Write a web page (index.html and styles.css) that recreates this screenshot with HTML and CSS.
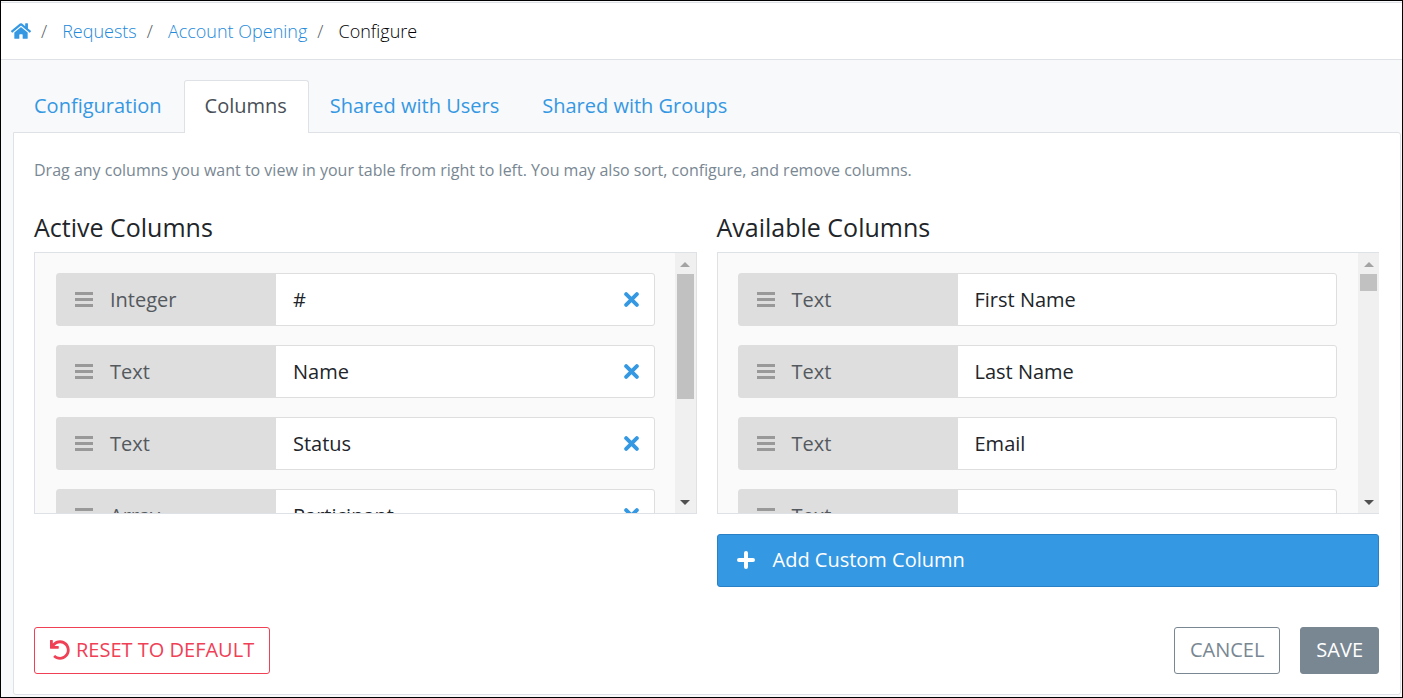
FILE: index.html
```
<!DOCTYPE html>
<html lang="en">
<head>
<meta charset="utf-8">
<title>Configure</title>
<link rel="stylesheet" href="styles.css">
</head>
<body>
<svg width="0" height="0" class="sprite" aria-hidden="true">
  <symbol id="bars" viewBox="0 0 18 16"><path d="M0 0h18v3H0zM0 6h18v3H0zM0 12h18v3H0z" fill="currentColor"/></symbol>
  <symbol id="times" viewBox="0 0 14 14"><path d="M2 2l10 10M12 2L2 12" stroke="currentColor" stroke-width="3.6" stroke-linecap="round"/></symbol>
</svg>
<div class="frame">
  <nav class="breadcrumb" aria-label="Breadcrumb">
    <a href="#" aria-label="Home"><svg class="home" viewBox="0 0 576 512" aria-hidden="true"><path fill="currentColor" d="M280.37 148.26L96 300.11V464a16 16 0 0 0 16 16l112.06-.29a16 16 0 0 0 15.92-16V368a16 16 0 0 1 16-16h64a16 16 0 0 1 16 16v95.64a16 16 0 0 0 16 16.05L464 480a16 16 0 0 0 16-16V300L295.67 148.26a12.19 12.19 0 0 0-15.3 0zM571.6 251.47L488 182.56V44.05a12 12 0 0 0-12-12h-56a12 12 0 0 0-12 12v72.61L318.47 43a48 48 0 0 0-61 0L4.34 251.47a12 12 0 0 0-1.6 16.9l25.5 31A12 12 0 0 0 45.15 301l235.22-193.74a12.19 12.19 0 0 1 15.3 0L530.9 301a12 12 0 0 0 16.9-1.6l25.5-31a12 12 0 0 0-1.7-16.93z"/></svg></a>
    <span class="sep">/</span>
    <a href="#">Requests</a>
    <span class="sep">/</span>
    <a href="#">Account Opening</a>
    <span class="sep">/</span>
    <span class="current">Configure</span>
  </nav>
  <main class="content">
    <nav class="tabs">
      <a class="tab" href="#">Configuration</a>
      <a class="tab active" href="#" aria-current="page">Columns</a>
      <a class="tab" href="#">Shared with Users</a>
      <a class="tab" href="#">Shared with Groups</a>
    </nav>
    <section class="card">
      <p class="hint">Drag any columns you want to view in your table from right to left. You may also sort, configure, and remove columns.</p>
      <div class="lists">
        <div class="group">
          <h2>Active Columns</h2>
          <div class="panel">
            <div class="items">
              <div class="item"><span class="type"><svg class="bars"><use href="#bars"/></svg>Integer</span><span class="name">#</span><button class="remove" aria-label="Remove #"><svg><use href="#times"/></svg></button></div>
              <div class="item"><span class="type"><svg class="bars"><use href="#bars"/></svg>Text</span><span class="name">Name</span><button class="remove" aria-label="Remove Name"><svg><use href="#times"/></svg></button></div>
              <div class="item"><span class="type"><svg class="bars"><use href="#bars"/></svg>Text</span><span class="name">Status</span><button class="remove" aria-label="Remove Status"><svg><use href="#times"/></svg></button></div>
              <div class="item"><span class="type"><svg class="bars"><use href="#bars"/></svg>Array</span><span class="name">Participant</span><button class="remove" aria-label="Remove Participant"><svg><use href="#times"/></svg></button></div>
            </div>
            <div class="scrollbar" aria-hidden="true"><span class="arrow up"></span><span class="track"><span class="thumb long"></span></span><span class="arrow down"></span></div>
          </div>
        </div>
        <div class="group">
          <h2>Available Columns</h2>
          <div class="panel open">
            <div class="items">
              <div class="item"><span class="type"><svg class="bars"><use href="#bars"/></svg>Text</span><span class="name">First Name</span></div>
              <div class="item"><span class="type"><svg class="bars"><use href="#bars"/></svg>Text</span><span class="name">Last Name</span></div>
              <div class="item"><span class="type"><svg class="bars"><use href="#bars"/></svg>Text</span><span class="name">Email</span></div>
              <div class="item"><span class="type"><svg class="bars"><use href="#bars"/></svg>Text</span><span class="name"></span></div>
            </div>
            <div class="scrollbar" aria-hidden="true"><span class="arrow up"></span><span class="track"><span class="thumb"></span></span><span class="arrow down"></span></div>
          </div>
          <button class="add"><svg viewBox="0 0 18 18" aria-hidden="true"><path d="M9 2v14M2 9h14" stroke="currentColor" stroke-width="4" stroke-linecap="round"/></svg>Add Custom Column</button>
        </div>
      </div>
      <div class="actions">
        <button class="btn danger"><svg viewBox="0 0 512 512" aria-hidden="true"><path fill="currentColor" d="M212.333 224.333H12c-6.627 0-12-5.373-12-12V12C0 5.373 5.373 0 12 0h48c6.627 0 12 5.373 12 12v78.112C117.773 39.279 184.26 7.47 258.175 8.007c136.906.994 246.448 111.623 246.157 248.532C504.041 393.258 393.12 504 256.333 504c-64.089 0-122.496-24.313-166.51-64.215-5.099-4.622-5.334-12.554-.467-17.42l33.967-33.967c4.474-4.474 11.662-4.717 16.401-.525C170.76 415.336 211.58 432 256.333 432c97.268 0 176-78.716 176-176 0-97.267-78.716-176-176-176-58.496 0-110.28 28.476-142.274 72.333h98.274c6.627 0 12 5.373 12 12v48c0 6.627-5.373 12-12 12z"/></svg>RESET TO DEFAULT</button>
        <button class="btn cancel">CANCEL</button>
        <button class="btn save">SAVE</button>
      </div>
    </section>
  </main>
</div>
</body>
</html>
```
FILE: styles.css
```
* { box-sizing: border-box; }
body {
  margin: 0;
  font-family: "Open Sans", "Liberation Sans", sans-serif;
  font-size: 20px;
  line-height: 30px;
  color: #212529;
  background: #fff;
}
a { color: #3498e3; text-decoration: none; }
button { font: inherit; cursor: pointer; }
.sprite { position: absolute; }
.frame {
  min-height: 100vh;
  border: 1px solid #000;
  padding-top: 1px;
  background: #f8f9fb;
}
.breadcrumb {
  display: flex;
  align-items: center;
  height: 58px;
  padding: 0 10px;
  border-top: 1px solid #dee2e6;
  border-bottom: 1px solid #dee2e6;
  background: #fff;
  font-size: 18px;
  font-weight: 300;
}
.breadcrumb a { display: flex; color: #2389da; }
.home { width: 20px; height: 18px; color: #3498e3; }
.sep { margin: 0 15px 0 10px; color: #54595e; }
.current { color: #000; }
.content { padding: 20px 1px 1px 12px; }
.tabs { display: flex; }
.tab {
  padding: 10px 21px 10px 20px;
  border: 1px solid transparent;
  border-bottom: 0;
  height: 52px;
}
.tab.active {
  height: 53px;
  margin-bottom: -1px;
  border-color: #dee2e6;
  border-radius: 3px 3px 0 0;
  background: #fff;
  color: #495057;
  z-index: 1;
}
.card {
  padding: 20px 21px 20px 20px;
  border: 1px solid #dee2e6;
  border-radius: 0 3px 3px 3px;
  background: #fff;
}
.hint {
  margin: 5px 0 30px;
  font-size: 16px;
  line-height: 24px;
  color: #798793;
}
.lists { display: grid; grid-template-columns: 1fr 1fr; gap: 20px; }
h2 { margin: 0 0 10px; font-size: 25px; line-height: 30px; font-weight: 400; }
.panel {
  display: flex;
  height: 262px;
  overflow: hidden;
  border: 1px solid #dee2e6;
  background: #fafafa;
}
.panel.open { border-right: 0; }
.items {
  flex: 1;
  display: flex;
  flex-direction: column;
  gap: 19px;
  padding: 20px 20px 0 21px;
}
.open .items { padding: 20px 21px 0 20px; }
.item {
  flex: none;
  display: flex;
  align-items: stretch;
  height: 53px;
  border: 1px solid #dedede;
  border-radius: 3px;
  background: #fff;
}
.type {
  display: flex;
  align-items: center;
  gap: 17px;
  width: 219px;
  padding-left: 18px;
  background: #dedede;
  color: #54595e;
}
.bars { width: 18px; height: 16px; color: #999; }
.name { flex: 1; padding: 11px 17px 0; }
.remove { display: flex; align-items: center; padding: 0 15px; border: 0; background: none; color: #3498e3; }
.remove svg { width: 15px; height: 15px; }
.scrollbar {
  display: flex;
  flex-direction: column;
  align-items: center;
  justify-content: space-between;
  width: 21px;
  padding: 9px 0 8px;
  background: #f0f0f0;
}
.arrow { border: 5px solid transparent; }
.up { border-top: 0; border-bottom-color: #a3a3a3; }
.down { border-bottom: 0; border-top-color: #505050; }
.track { flex: 1; padding-top: 7px; }
.thumb { display: block; width: 17px; height: 17px; background: #c1c1c1; }
.thumb.long { height: 125px; }
.add {
  display: flex;
  align-items: center;
  gap: 18px;
  width: 100%;
  margin-top: 20px;
  padding: 10px 19px 11px;
  border: 1px solid #2980c4;
  border-radius: 3px;
  background: #3498e3;
  color: #fff;
  line-height: 30px;
}
.add svg { width: 18px; height: 18px; }
.actions { display: flex; gap: 20px; margin-top: 40px; }
.btn {
  display: flex;
  align-items: center;
  height: 47px;
  padding: 0 15px 2px;
  border: 1px solid #798793;
  border-radius: 3px;
  background: #fff;
}
.danger { gap: 6px; margin-right: auto; border-color: #ef4056; color: #ef4056; }
.danger svg { width: 20px; height: 20px; }
.cancel { color: #798793; }
.save { background: #798793; color: #fff; }
```
